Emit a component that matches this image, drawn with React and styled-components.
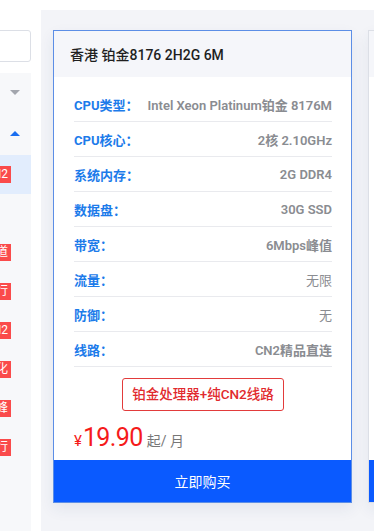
import React from "react";
import styled, { createGlobalStyle } from "styled-components";

const Global = createGlobalStyle`
  html, body { margin: 0; padding: 0; background: #fff; }
  body { font-family: "Roboto", "Noto Sans CJK SC", sans-serif; }
  * { box-sizing: border-box; }
`;

const Page = styled.div`
  display: flex;
  height: 531px;
  overflow: hidden;
`;

const Sidebar = styled.aside`
  flex: 0 0 31px;
  width: 31px;
  overflow: hidden;
`;

const SideInner = styled.div`
  width: 200px;
  margin-left: -169px;
  padding-top: 30px;
  display: flex;
  flex-direction: column;
  gap: 11px;
`;

const SearchBox = styled.div`
  height: 32px;
  border: 1px solid #dcdfe6;
  border-radius: 3px;
  background: #fff;
`;

const Menu = styled.div`
  background: #f7f8fa;
  height: 480px;
`;

const MenuHead = styled.div`
  height: ${(p) => p.$h || 39}px;
  display: flex;
  align-items: center;
  justify-content: flex-end;
  padding-right: 11px;
`;

const Triangle = styled.span`
  width: 0;
  height: 0;
  border-left: 5px solid transparent;
  border-right: 5px solid transparent;
  ${(p) =>
    p.$up
      ? `border-bottom: 5px solid #1a6ef0;`
      : `border-top: 5px solid #a3a6ad;`}
`;

const MenuItem = styled.div`
  height: 39px;
  display: flex;
  align-items: center;
  justify-content: flex-end;
  padding-right: 20px;
  background: ${(p) => (p.$active ? "#e2edfd" : "transparent")};
  font-size: 13px;
  color: #333;
`;

const Badge = styled.span`
  height: 17px;
  line-height: 17px;
  padding: 0 3px;
  background: #fa4b4b;
  color: #fff;
  font-size: 12px;
  white-space: nowrap;
`;

const Main = styled.main`
  flex: 1;
  margin: 10px 0 0 10px;
  background: #f3f4f8;
  padding: 20px 0 0 12px;
  display: flex;
  gap: 16px;
  align-items: flex-start;
  overflow: hidden;
`;

const Card = styled.section`
  flex: 0 0 299px;
  width: 299px;
  height: 473px;
  background: #fff;
  border: 1px solid ${(p) => (p.$active ? "#5c8ee6" : "#dcdfe6")};
  box-shadow: 0 6px 14px rgba(40, 60, 120, 0.08);
  display: flex;
  flex-direction: column;
`;

const CardHead = styled.div`
  height: 46px;
  background: #f5f6fa;
  padding-left: 16px;
  display: flex;
  align-items: center;
  font-size: 14px;
  font-weight: 500;
  color: #1f1f1f;
`;

const CardBody = styled.div`
  padding: 10px 19px 0 20px;
`;

const SpecRow = styled.div`
  height: 35px;
  border-bottom: 1px solid #e9eaee;
  display: flex;
  align-items: center;
  justify-content: space-between;
`;

const Label = styled.span`
  font-size: 13px;
  font-weight: 700;
  color: #1c7bea;
`;

const Value = styled.span`
  font-size: 13px;
  font-weight: ${(p) => (p.$bold ? 600 : 400)};
  color: #8a8c91;
`;

const TagWrap = styled.div`
  display: flex;
  justify-content: center;
  margin-top: 11px;
`;

const Tag = styled.span`
  height: 33px;
  line-height: 31px;
  padding: 0 9px;
  border: 1px solid #e23b3b;
  border-radius: 3px;
  color: #e12a2e;
  font-size: 13.5px;
  font-weight: 500;
`;

const PriceLine = styled.div`
  display: flex;
  align-items: baseline;
  margin-top: 12px;
  height: 30px;
`;

const Yen = styled.span`
  font-size: 15px;
  color: #f51b1b;
`;

const Amount = styled.span`
  font-size: 25px;
  color: #f51b1b;
  letter-spacing: -0.6px;
  margin-left: 1px;
`;

const Unit = styled.span`
  font-size: 14px;
  color: #777;
  margin-left: 4px;
`;

const BuyButton = styled.button`
  margin-top: auto;
  height: 42px;
  border: none;
  background: #0a5aff;
  color: #fff;
  font-family: inherit;
  font-size: 14px;
  display: flex;
  align-items: center;
  justify-content: center;
  cursor: pointer;
`;

const specs = [
  ["CPU类型：", "Intel Xeon Platinum铂金 8176M", true],
  ["CPU核心：", "2核 2.10GHz", true],
  ["系统内存：", "2G DDR4", true],
  ["数据盘：", "30G SSD", true],
  ["带宽：", "6Mbps峰值", true],
  ["流量：", "无限", false],
  ["防御：", "无", false],
  ["线路：", "CN2精品直连", true],
];

const menuItems = [
  { badge: "CN2", active: true },
  { badge: null },
  { badge: "通道" },
  { badge: "流行" },
  { badge: "CN2" },
  { badge: "优化" },
  { badge: "峰" },
  { badge: "流行" },
];

function ProductCard({ active }) {
  return (
    <Card $active={active}>
      <CardHead>香港 铂金8176 2H2G 6M</CardHead>
      <CardBody>
        {specs.map(([l, v, b]) => (
          <SpecRow key={l}>
            <Label>{l}</Label>
            <Value $bold={b}>{v}</Value>
          </SpecRow>
        ))}
        <TagWrap>
          <Tag>铂金处理器+纯CN2线路</Tag>
        </TagWrap>
        <PriceLine>
          <Yen>¥</Yen>
          <Amount>19.90</Amount>
          <Unit>起/ 月</Unit>
        </PriceLine>
      </CardBody>
      <BuyButton>立即购买</BuyButton>
    </Card>
  );
}

export default function App() {
  return (
    <>
      <Global />
      <Page>
        <Sidebar>
          <SideInner>
            <SearchBox />
            <Menu>
              <MenuHead>
                <Triangle />
              </MenuHead>
              <MenuHead $h={43}>
                <Triangle $up />
              </MenuHead>
              {menuItems.map((m, i) => (
                <MenuItem key={i} $active={m.active}>
                  {m.badge && <Badge>{m.badge}</Badge>}
                </MenuItem>
              ))}
            </Menu>
          </SideInner>
        </Sidebar>
        <Main>
          <ProductCard active />
          <ProductCard />
        </Main>
      </Page>
    </>
  );
}
